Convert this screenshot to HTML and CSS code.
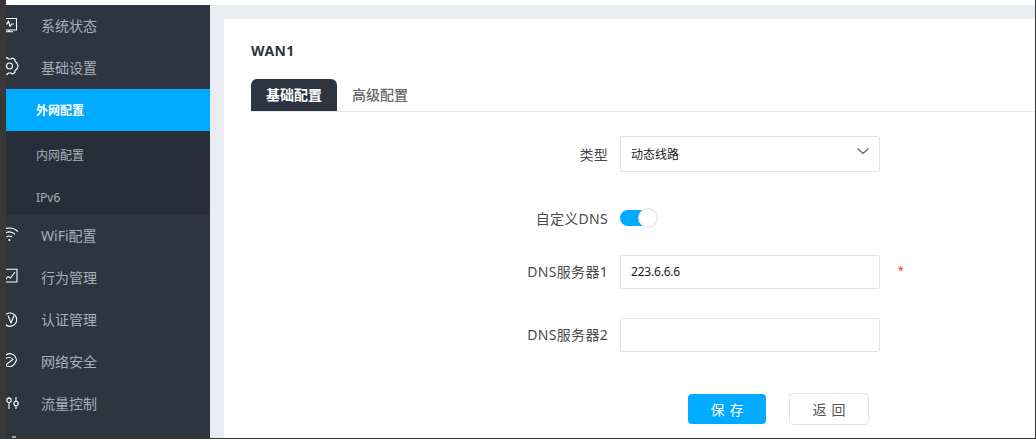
FILE: index.html
```html
<!DOCTYPE html>
<html lang="zh-CN">
<head>
<meta charset="utf-8">
<title>WAN1</title>
<link rel="stylesheet" href="styles.css">
</head>
<body>
<div class="frame">
  <div class="topline"></div>
  <div class="layout">
    <nav class="sidebar">
      <div class="item"><svg class="icon" viewBox="0 0 14 20"><path d="M-6 2.500H10.500V14H-6M-2 8H1L2.500 5L4 10.500L5.500 8H8M-2 15.800H7M3 14V15.800"/></svg><span>系统状态</span></div>
      <div class="item"><svg class="icon" viewBox="0 0 14 20"><path d="M-1 0L1 -0.500L2.500 1L5 1L6.500 0L9 1.500L9 3.500L11 5L12 8L11 11L9 12.500L9 14.500L6.500 16L5 15L2.500 15L1 16.500L-1 16"/><circle cx="3.500" cy="8" r="3"/></svg><span>基础设置</span></div>
      <div class="submenu">
        <div class="subitem active">外网配置</div>
        <div class="subitem first">内网配置</div>
        <div class="subitem">IPv6</div>
      </div>
      <div class="item"><svg class="icon" viewBox="0 0 14 20"><path d="M0.500 11.200A4 4 0 0 1 6.100 11.200M-2.400 8.300A8 8 0 0 1 9 8.300M-5.200 5.500A12 12 0 0 1 11.800 5.500"/><circle cx="3.300" cy="14" r="1.100" class="dot"/></svg><span>WiFi配置</span></div>
      <div class="item"><svg class="icon" viewBox="0 0 14 20"><path d="M-6 1.200H11V14H-6M-1 12L2 8.500L4.500 10L9 4"/></svg><span>行为管理</span></div>
      <div class="item"><svg class="icon" viewBox="0 0 14 20"><circle cx="4" cy="9.700" r="6.700"/><path d="M2 5.500L5 13L8 5.500"/></svg><span>认证管理</span></div>
      <div class="item"><svg class="icon" viewBox="0 0 14 20"><path d="M0 3C3 0.500 9 1 10.500 8C9 12 7 14.500 4 14.500C2 14.500 0 14 -0.500 13L7 7.500C5 5 2 5 0 6.500"/></svg><span>网络安全</span></div>
      <div class="item"><svg class="icon" viewBox="0 0 14 20"><path d="M3 3V4M3 8.500V15M10 3V7.500M10 11.500V15"/><circle cx="3" cy="6.300" r="2.200"/><circle cx="10" cy="9.500" r="2.200"/></svg><span>流量控制</span></div>
      <div class="item"><svg class="icon" viewBox="0 0 14 20"><path d="M6 1H10"/></svg></div>
    </nav>
    <main class="content">
      <section class="card">
        <h1 class="title">WAN1</h1>
        <div class="tabs">
          <div class="tab current">基础配置</div>
          <div class="tab">高级配置</div>
        </div>
        <form class="form">
          <div class="row row-type">
            <label class="label">类型</label>
            <div class="control select"><span>动态线路</span><svg class="chevron" viewBox="0 0 12 6"><path d="M0.500 0.500L6 5.500L11.500 0.500"/></svg></div>
          </div>
          <div class="row row-switch">
            <label class="label">自定义DNS</label>
            <div class="switch"><span class="knob"></span></div>
          </div>
          <div class="row row-dns1">
            <label class="label label-up">DNS服务器1</label>
            <div class="control input">223.6.6.6</div>
            <span class="required">*</span>
          </div>
          <div class="row row-dns2">
            <label class="label label-up">DNS服务器2</label>
            <div class="control input"></div>
          </div>
          <div class="actions">
            <button type="button" class="btn primary">保 存</button>
            <button type="button" class="btn ghost">返 回</button>
          </div>
        </form>
      </section>
    </main>
  </div>
</div>
</body>
</html>
```
FILE: styles.css
```css
* { box-sizing: border-box; }
html, body { margin: 0; padding: 0; height: 439px; overflow: hidden; }
body { font-family: "Noto Sans", "Noto Sans CJK SC", sans-serif; background: #fff; }
.frame {
  width: 1036px; height: 439px;
  display: flex; flex-direction: column;
  border-left: 6px solid #383838;
  border-right: 1px solid #383838;
  border-bottom: 1px solid #383838;
  overflow: hidden;
}
.topline { height: 5px; background: #fff; flex: none; }
.layout { flex: 1; display: flex; min-height: 0; }

.sidebar { width: 204px; flex: none; background: #2d3541; overflow: hidden; color: #a7aeb8; font-size: 14px; }
.item { height: 42px; flex: none; display: flex; align-items: center; }
.item span { margin-top: -2px; }
.icon { width: 14px; height: 20px; flex: none; margin-right: 21px; overflow: visible; fill: none; stroke: #fff; stroke-width: 1.100; stroke-linejoin: round; }
.icon .dot { fill: #fff; stroke: none; }
.submenu { height: 126px; overflow: hidden; background: #272e39; font-size: 12px; }
.subitem { height: 42px; line-height: 44px; padding-left: 30px; }
.subitem.first { margin-top: 3px; }
.subitem.active { background: #00aaff; color: #fff; font-weight: 700; }

.content { flex: 1; min-width: 0; background: #e9edf2; padding: 14px 0 0 14px; }
.card { height: 100%; background: #fff; padding: 20px 0 0 27px; }
.title { margin: 0; height: 24px; line-height: 24px; font-size: 14px; font-weight: 700; letter-spacing: 0.400px; color: #2d3541; }
.tabs { display: flex; margin-top: 16px; height: 33px; border-bottom: 1px solid #e8e8e8; }
.tab { height: 32px; line-height: 32px; padding: 0 15px; font-size: 14px; font-weight: 500; color: #666; border-radius: 6px 6px 0 0; }
.tab.current { background: #2d3541; color: #fff; font-weight: 700; }

.form { display: flex; flex-direction: column; }
.row { display: flex; align-items: center; }
.label { width: 357px; margin-right: 12px; text-align: right; font-size: 14px; letter-spacing: 0.300px; color: #4a4a4a; flex: none; }
.label-up { padding-bottom: 3px; }
.control { width: 260px; border: 1px solid #dfe4e8; border-radius: 2px; font-size: 12px; color: #222; display: flex; align-items: center; padding: 0 10px; flex: none; }
.row-type { margin-top: 24px; }
.select { height: 36px; justify-content: space-between; }
.chevron { width: 12px; height: 6px; margin-top: -7px; fill: none; stroke: #666; stroke-width: 1.300; }
.row-switch { margin-top: 36px; height: 20px; }
.switch { width: 38px; height: 20px; position: relative; display: flex; align-items: center; }
.switch::before { content: ""; display: block; width: 32px; height: 16px; background: #00aaff; border-radius: 8px; }
.knob { position: absolute; right: 0; top: 0; width: 20px; height: 20px; border-radius: 50%; background: #fff; border: 1px solid #d9dde1; }
.row-dns1 { margin-top: 27px; }
.row-dns2 { margin-top: 29px; }
.input { height: 34px; padding-bottom: 2px; letter-spacing: -0.200px; }
.required { margin-left: 18px; padding-bottom: 4px; font-size: 10px; color: #f5222d; }
.actions { margin-top: 41px; padding-left: 437px; display: flex; align-items: center; gap: 23px; }
.btn { font-family: inherit; font-size: 14px; word-spacing: 1.500px; border-radius: 4px; padding: 0; cursor: pointer; }
.primary { width: 78px; height: 30px; border: 0; background: #00aaff; color: #fff; }
.ghost { width: 80px; height: 32px; background: #fff; border: 1px solid #dfe4e8; color: #555; }
```
